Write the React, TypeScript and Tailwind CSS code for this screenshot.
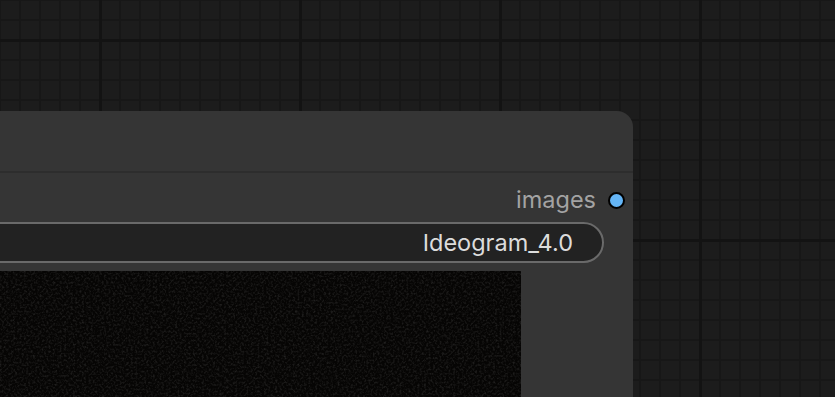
import React from "react";

export default function App() {
  return (
    <div
      className="relative w-[835px] h-[397px] overflow-hidden bg-[#1c1c1c] bg-[linear-gradient(to_right,#131313_0_3px,transparent_3px),linear-gradient(to_bottom,#131313_0_3px,transparent_3px),linear-gradient(to_right,#171717_0_2px,transparent_2px),linear-gradient(to_bottom,#171717_0_2px,transparent_2px)] bg-[size:200px_200px,200px_200px,20px_20px,20px_20px] bg-[position:99px_0,0_39px,-1px_0,0_-1px]"
      style={{ fontFamily: "Inter, 'Noto Sans', sans-serif" }}
    >
      {/* node on the canvas */}
      <div className="absolute left-[-100px] top-[111px] w-[733px] h-[320px] bg-[#353535] rounded-tr-[16px] flex flex-col">
        <div className="h-[62px] shrink-0 border-b-2 border-[#2d2d2d]" />
        <div className="mt-[15px] h-[24px] shrink-0 flex items-center justify-end pr-[8px]">
          <span className="text-[23.5px] leading-none text-[#a3a3a3] mr-[12px]">images</span>
          <span className="w-[17px] h-[17px] rounded-full bg-[#64b5f6] border-2 border-black" />
        </div>
        <div className="mt-[10px] mr-[29px] h-[41px] shrink-0 rounded-full border-2 border-[#6a6a6a] bg-[#222222] flex items-center justify-end pr-[29px]">
          <span className="text-[23.5px] leading-none text-[#dcdcdc]">Ideogram_4.0</span>
        </div>
        <div className="mt-[8px] mr-[112px] flex-1 bg-[#060504] relative overflow-hidden">
          <svg className="absolute inset-0 w-full h-full" xmlns="http://www.w3.org/2000/svg">
            <filter id="n">
              <feTurbulence type="fractalNoise" baseFrequency="0.45" numOctaves="2" seed="5" />
              <feColorMatrix type="matrix" values="0 0 0 0 1  0 0 0 0 1  0 0 0 0 1  0 0 0 0.25 -0.11" />
            </filter>
            <rect width="100%" height="100%" filter="url(#n)" />
          </svg>
        </div>
      </div>
    </div>
  );
}
